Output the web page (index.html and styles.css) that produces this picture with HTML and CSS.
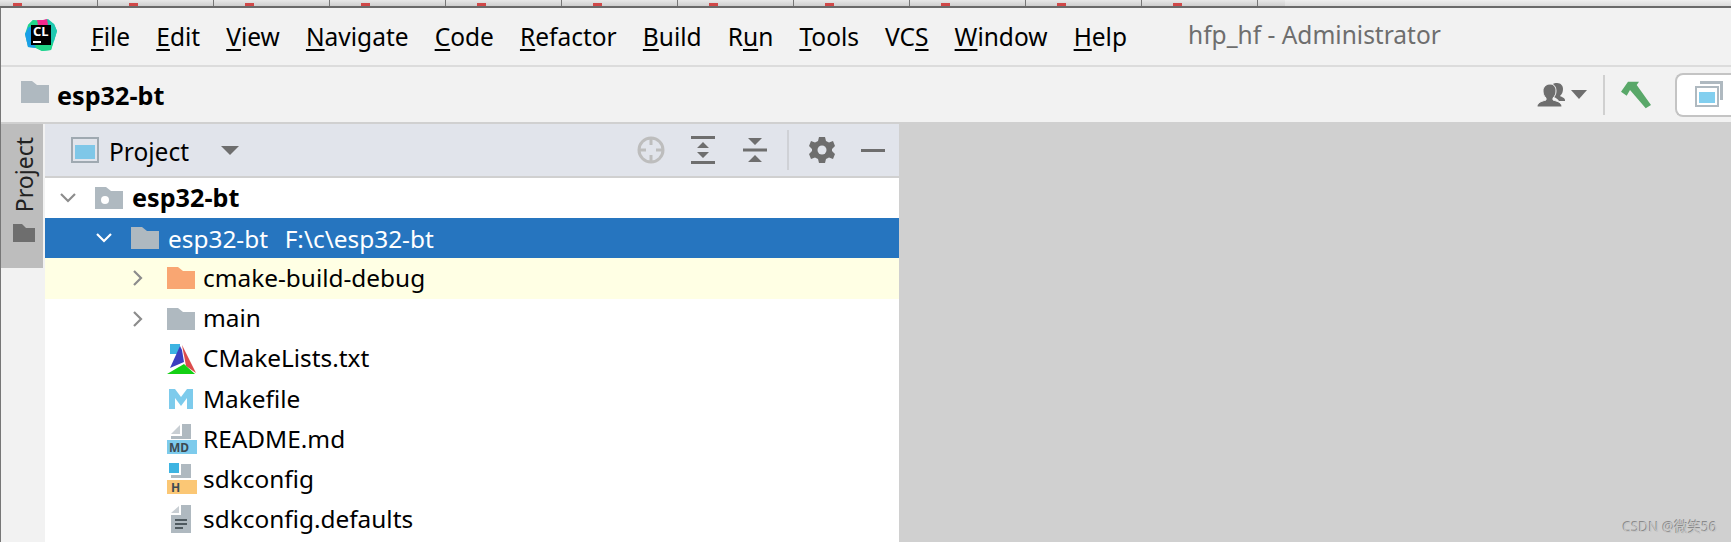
FILE: index.html
```html
<!DOCTYPE html>
<html lang="en">
<head>
<meta charset="utf-8">
<title>hfp_hf - Administrator</title>
<link rel="stylesheet" href="styles.css">
</head>
<body>
<div class="topstrip"><div class="strip-tabs"></div><div class="strip-rest"></div></div>
<div class="window">
  <header class="menubar">
    <svg class="logo" viewBox="0 0 32 32" width="32" height="32">
      <path d="M8 1 L16 2 L23 0 L29 5 L32 12 L29 22 L26 31 L17 32 L11 29 L3 28 L0 15 L3 6 Z" fill="#19c8a8"/>
      <path d="M3 6 L8 1 L16 2 L14 8 L4 10 Z" fill="#21d789"/>
      <path d="M12 1 L18 1 L22 0 L23 6 L13 6 Z" fill="#f32a8e"/>
      <path d="M0 15 L4 8 L8 8 L8 24 L11 29 L3 28 Z" fill="#1a9fe8"/>
      <path d="M11 29 L17 32 L26 31 L28 24 L10 24 Z" fill="#21d789"/>
      <path d="M24 3 L29 5 L32 12 L29 22 L26 20 Z" fill="#1fc8b0"/>
      <rect x="6" y="6" width="20" height="20" fill="#000"/>
      <rect x="8" y="22" width="8" height="2" fill="#fff"/>
      <text x="8" y="17" class="logo-text">CL</text>
    </svg>
    <nav class="menu">
      <span><u>F</u>ile</span><span><u>E</u>dit</span><span><u>V</u>iew</span><span><u>N</u>avigate</span><span><u>C</u>ode</span><span><u>R</u>efactor</span><span><u>B</u>uild</span><span>R<u>u</u>n</span><span><u>T</u>ools</span><span>VC<u>S</u></span><span><u>W</u>indow</span><span><u>H</u>elp</span>
    </nav>
    <div class="wintitle">hfp_hf - Administrator</div>
  </header>
  <div class="navbar">
    <svg class="nav-folder" viewBox="0 0 28 22" width="28" height="22"><path d="M0 0H11L16 4H28V22H0Z" fill="#afb9c0"/></svg>
    <b class="crumb">esp32-bt</b>
    <div class="nav-right">
      <svg class="users" viewBox="0 0 28 24" width="28" height="24">
        <path d="M20 0c4 0 6 3 6 6 0 3-1 5-3 7 2 1 5 2 5 4v1h-6c-1-2-3-3-5-4 2-4 2-10-1-13 1-1 2-1 4-1Z" fill="#6e6e6e"/>
        <path d="M13 1c4 0 6 3 6 7 0 3-1 5-3 7v2c3 1 9 2 9 7H0c0-5 6-6 9-7v-2c-2-2-3-4-3-7 0-4 3-7 7-7Z" fill="#6e6e6e" stroke="#f2f2f2" stroke-width="1"/>
      </svg>
      <span class="caret nav-caret"></span>
      <span class="sep"></span>
      <svg class="hammer" viewBox="0 0 31 28" width="31" height="28">
        <path d="M7 .7H18L15.700 4L30 24L24.700 27.300L9 9L5.700 14.700L0 10.700Z" fill="#59a869"/>
      </svg>
      <div class="winbtn">
        <svg viewBox="0 0 28 26" width="28" height="26">
          <path d="M5 0H28V19H25V3H5Z" fill="#afb9c0"/>
          <rect x="0" y="5" width="24" height="21" fill="#afb9c0"/>
          <rect x="2" y="7" width="20" height="17" fill="#fff"/>
          <rect x="4" y="11" width="16" height="11" fill="#82cfef"/>
        </svg>
      </div>
    </div>
  </div>
  <main class="main">
    <aside class="stripe">
      <div class="stripe-btn">
        <span class="vtext">Project</span>
        <svg viewBox="0 0 22 18" width="22" height="18"><path d="M0 0H9L13 4H22V18H0Z" fill="#6e6e6e"/></svg>
      </div>
    </aside>
    <section class="panel">
      <div class="panel-head">
        <svg class="proj-ico" viewBox="0 0 28 26" width="28" height="26">
          <rect width="28" height="26" fill="#9fa9b1"/>
          <rect x="2" y="2" width="24" height="22" fill="#e1e4eb"/>
          <rect x="4" y="8" width="20" height="14" fill="#7fc7e8"/>
        </svg>
        <span class="panel-title">Project</span>
        <span class="caret head-caret"></span>
        <div class="tools">
          <svg class="t-locate" viewBox="0 0 28 28" width="28" height="28"><circle cx="14" cy="14" r="12" fill="none" stroke="#bdbdbd" stroke-width="3"/><path d="M14 2V9M14 19V26M2 14H9M19 14H26" stroke="#bdbdbd" stroke-width="3"/></svg>
          <svg class="t-expand" viewBox="0 0 24 28" width="24" height="28"><path d="M0 0H24V3H0ZM0 25H24V28H0ZM12 6L18 12H6ZM12 22L6 16H18Z" fill="#6e6e6e"/></svg>
          <svg class="t-collapse" viewBox="0 0 24 24" width="24" height="24"><path d="M0 10.500H24V13.500H0ZM5 0H19L12 7ZM5 24H19L12 17Z" fill="#6e6e6e"/></svg>
          <span class="tool-sep"></span>
          <svg class="t-gear" viewBox="0 0 26 26" width="26" height="26"><path d="M10 0H16L17 4L20 5.500L24 4L26 9L23 12V14L26 17L24 22L20 20.500L17 22L16 26H10L9 22L6 20.500L2 22L0 17L3 14V12L0 9L2 4L6 5.500L9 4Z" fill="#6e6e6e"/><circle cx="13" cy="13" r="4.500" fill="#e1e4eb"/></svg>
          <span class="minus"></span>
        </div>
      </div>
      <ul class="tree">
        <li class="row lvl0">
          <svg class="arrow" viewBox="0 0 18 12" width="18" height="12"><path d="M2 2L9 9L16 2" fill="none" stroke="#8c8c8c" stroke-width="2.200"/></svg>
          <svg viewBox="0 0 28 22" width="28" height="22"><path d="M0 0H11L16 4H28V22H0Z" fill="#afb9c0"/><circle cx="10" cy="13" r="4" fill="#fff"/></svg>
          <b class="label">esp32-bt</b>
        </li>
        <li class="row lvl1 selected">
          <svg class="arrow" viewBox="0 0 18 12" width="18" height="12"><path d="M2 2L9 9L16 2" fill="none" stroke="#fff" stroke-width="2.200"/></svg>
          <svg viewBox="0 0 28 22" width="28" height="22"><path d="M0 0H11L16 4H28V22H0Z" fill="#afb9c0"/></svg>
          <span class="label">esp32-bt&nbsp; F:\c\esp32-bt</span>
        </li>
        <li class="row lvl2 excluded">
          <svg class="arrow" viewBox="0 0 12 18" width="12" height="18"><path d="M2 2L9 9L2 16" fill="none" stroke="#8c8c8c" stroke-width="2.200"/></svg>
          <svg viewBox="0 0 28 22" width="28" height="22"><path d="M0 0H11L16 4H28V22H0Z" fill="#f9a672"/></svg>
          <span class="label">cmake-build-debug</span>
        </li>
        <li class="row lvl2">
          <svg class="arrow" viewBox="0 0 12 18" width="12" height="18"><path d="M2 2L9 9L2 16" fill="none" stroke="#8c8c8c" stroke-width="2.200"/></svg>
          <svg viewBox="0 0 28 22" width="28" height="22"><path d="M0 0H11L16 4H28V22H0Z" fill="#afb9c0"/></svg>
          <span class="label">main</span>
        </li>
        <li class="row lvl3">
          <svg viewBox="0 0 30 30" width="30" height="30">
            <rect x="3" y="0" width="10" height="10" fill="#3db4e2"/>
            <path d="M13 2L3 24L17 18L15 6Z" fill="#3b3fc0"/>
            <path d="M15 1L29 29L19 22Z" fill="#dc4c4c"/>
            <path d="M0 30L17 20L28 30Z" fill="#14d014"/>
          </svg>
          <span class="label">CMakeLists.txt</span>
        </li>
        <li class="row lvl3">
          <svg class="ico-m" viewBox="0 0 24 20" width="24" height="20"><path d="M0 0H6L12 8L18 0H24V20H18V9L12 17L6 9V20H0Z" fill="#7dcbec"/></svg>
          <span class="label">Makefile</span>
        </li>
        <li class="row lvl3">
          <svg viewBox="0 0 30 30" width="30" height="30">
            <path d="M4 10L13 1V10Z" fill="#c8ced3"/><path d="M15 0H24V15H4V12H15Z" fill="#afb9c0"/>
            <rect x="0" y="16" width="30" height="14" fill="#7dcbec"/>
            <text x="2" y="28" class="badge-text">MD</text>
          </svg>
          <span class="label">README.md</span>
        </li>
        <li class="row lvl3">
          <svg viewBox="0 0 30 32" width="30" height="32">
            <rect x="2" y="0" width="10" height="10" fill="#3db4e2"/>
            <path d="M14 1H24V15H4V12H14Z" fill="#afb9c0"/>
            <rect x="0" y="17" width="30" height="14" fill="#fbc775"/>
            <text x="4" y="29" class="badge-text">H</text>
          </svg>
          <span class="label">sdkconfig</span>
        </li>
        <li class="row lvl3">
          <svg viewBox="0 0 30 30" width="30" height="30">
            <path d="M4 8L12 1V8Z" fill="#c8ced3"/>
            <path d="M14 0H24V28H4V10H14Z" fill="#afb9c0"/>
            <path d="M8 14H20V16H8ZM8 18H20V20H8ZM8 22H16V24H8Z" fill="#4f5a60"/>
          </svg>
          <span class="label">sdkconfig.defaults</span>
        </li>
      </ul>
    </section>
    <div class="editor"></div>
  </main>
  <div class="watermark">CSDN @微笑56</div>
</div>
</body>
</html>
```
FILE: styles.css
```css
* { box-sizing: border-box; }
html, body { margin: 0; padding: 0; width: 1731px; height: 542px; overflow: hidden; }
body { font-family: "Noto Sans", "Open Sans", "Noto Sans CJK SC", sans-serif; color: #000; background: #d0d0d0; }
svg { display: block; flex: none; overflow: visible; }

.topstrip { height: 8px; display: flex; border-bottom: 2px solid #6a6a6a; }
.strip-tabs {
  width: 1285px;
  background:
    linear-gradient(90deg, transparent 97px, #777 97px 98px, transparent 98px) 0 0 / 116px 100% repeat-x,
    linear-gradient(90deg, transparent 13px, #d04848 13px 22px, transparent 22px) 0 3px / 116px 3px repeat-x,
    linear-gradient(#e8e8e8, #cfcfcf);
}
.strip-rest { flex: 1; background: linear-gradient(#efefef, #dcdcdc); }

.window { position: relative; height: 534px; border-left: 1px solid #777; display: flex; flex-direction: column; }

.menubar { height: 59px; flex: none; display: flex; align-items: center; background: #f2f2f2; border-bottom: 2px solid #dcdcdc; padding-left: 24px; }
.logo { margin-top: -3px; }
.logo-text { font: 700 13px "Noto Sans", sans-serif; fill: #fff; }
.menu { display: flex; margin-left: 34px; gap: 26.100px; font-size: 24.500px; line-height: 34px; white-space: nowrap; }
.menu u { text-underline-offset: 3px; text-decoration-thickness: 2px; }
.wintitle { margin-left: 61px; font-size: 24.500px; color: #6e6e6e; white-space: nowrap; margin-top: -4px; }

.navbar { height: 57px; flex: none; display: flex; align-items: center; background: #f2f2f2; padding-left: 20px; border-bottom: 2px solid #d0d0d0; }
.nav-folder { margin-top: -5px; }
.crumb { font-size: 25.200px; margin-left: 8px; }
.nav-right { margin-left: auto; display: flex; align-items: center; }
.users { margin-right: 6px; }
.caret { display: block; width: 0; height: 0; border-left: 8px solid transparent; border-right: 8px solid transparent; border-top: 9px solid #6e6e6e; }
.nav-caret { margin-right: 16px; }
.sep { width: 2px; height: 40px; background: #d0d0d0; margin-right: 16px; }
.hammer { margin-right: 23px; }
.winbtn { width: 56px; height: 44px; border: 2px solid #c4c4c4; border-right: 0; border-radius: 8px 0 0 8px; background: #fff; padding: 6px 0 0 18px; }

.main { flex: 1; display: flex; min-height: 0; }
.stripe { width: 44px; flex: none; background: #f2f2f2; }
.stripe-btn { width: 42px; height: 144px; background: #bdbdbd; display: flex; flex-direction: column; align-items: center; padding: 13px 0 0 3px; gap: 12px; }
.vtext { writing-mode: vertical-rl; transform: rotate(180deg); font-size: 23px; line-height: 26px; color: #222; }

.panel { width: 854px; flex: none; background: #fff; display: flex; flex-direction: column; }
.panel-head { height: 54px; flex: none; display: flex; align-items: center; background: #e1e4eb; border-bottom: 2px solid #d0d0d0; padding-left: 26px; }
.panel-title { font-size: 24.500px; margin-left: 10px; margin-bottom: -2px; }
.head-caret { margin-left: 32px; border-left-width: 9px; border-right-width: 9px; }
.tools { margin-left: auto; display: flex; align-items: center; padding-right: 14px; }
.t-expand { margin-left: 26px; }
.t-collapse { margin-left: 28px; }
.tool-sep { width: 2px; height: 40px; background: #cfd1d6; margin-left: 20px; }
.t-gear { margin-left: 20px; }
.minus { width: 24px; height: 3px; background: #6e6e6e; margin-left: 26px; }

.tree { list-style: none; margin: 0; padding: 0; }
.row { height: 40.200px; display: flex; align-items: center; font-size: 24.400px; white-space: nowrap; }
.row b { font-size: 25.200px; }
.label { margin-left: 9px; margin-bottom: 2px; }
.lvl0 { padding-left: 14px; }
.lvl0 .arrow { margin-right: 18px; }
.lvl1 { padding-left: 50px; }
.lvl1 .arrow { margin-right: 18px; }
.selected .label { margin-bottom: 0; word-spacing: 2px; }
.lvl2 { padding-left: 87px; }
.lvl2 .arrow { margin-right: 23px; }
.lvl2 .label { margin-left: 8px; }
.lvl3 { padding-left: 122px; }
.lvl3 .label { margin-left: 6px; }
.ico-m { margin-left: 2px; margin-right: 4px; }
.selected { background: #2675bf; color: #fff; }
.excluded { background: #ffffe4; }
.badge-text { font: 700 12px "Noto Sans", sans-serif; fill: #3d4a52; }

.editor { flex: 1; background: #d0d0d0; }

.watermark { position: absolute; right: 14px; bottom: 6px; font-size: 13.500px; color: #c6c6c6; text-shadow: -1px -1px 0 #8a8a8a; }
```
